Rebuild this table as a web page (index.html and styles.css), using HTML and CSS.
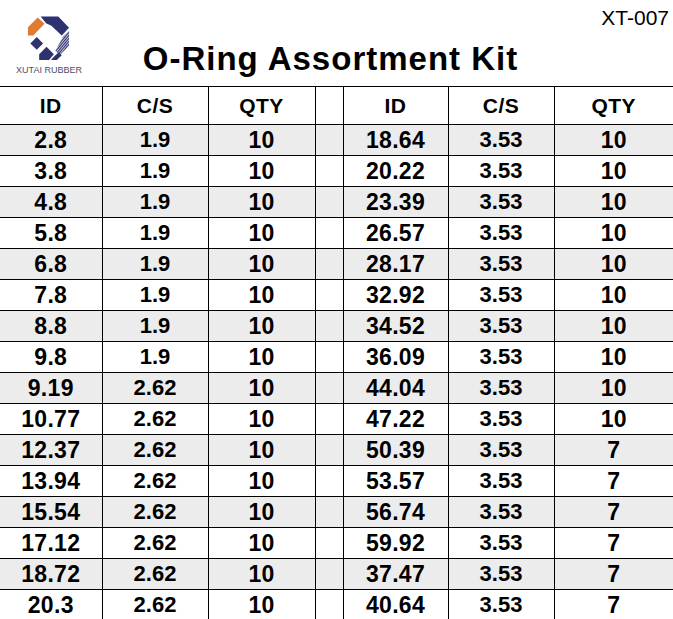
FILE: index.html
```html
<!DOCTYPE html>
<html lang="en">
<head>
<meta charset="utf-8">
<title>O-Ring Assortment Kit</title>
<link rel="stylesheet" href="styles.css">
</head>
<body>
<header class="top">
  <div class="brand">
    <svg class="logo" viewBox="0 0 48 48" width="47" height="47" aria-hidden="true">
      <defs>
        <pattern id="hatch" width="2" height="2" patternUnits="userSpaceOnUse" patternTransform="rotate(40)">
          <rect width="1.3" height="2" fill="#2f3270"/>
        </pattern>
      </defs>
      <polygon points="4,12.5 14,2.5 21,9 9.5,21 4,21" fill="#e07b32"/>
      <polygon points="17,1.5 35,1.5 46,13 38.5,21 28,11 22.5,8.5" fill="#2f3270"/>
      <polygon points="40,22 46,16 46,31.5 36.5,41 32,36.5" fill="url(#hatch)"/>
      <polygon points="13,22.5 19.5,29 13,35.5 6.5,29" fill="#2f3270"/>
      <polygon points="23,32.5 30.5,40 25.5,46 15.5,46 15.5,40" fill="#2f3270"/>
      <polygon points="31.5,41.5 35.5,38 38.5,41 33.5,46 27.5,46" fill="#2f3270"/>
    </svg>
    <div class="brand-name">XUTAI RUBBER</div>
  </div>
  <h1 class="title">O-Ring Assortment Kit</h1>
  <div class="code">XT-007</div>
</header>

<table class="kit">
  <colgroup>
    <col class="c-id"><col class="c-cs"><col class="c-qty">
    <col class="c-gap">
    <col class="c-id2"><col class="c-cs2"><col class="c-qty2">
  </colgroup>
  <thead>
    <tr>
      <th class="first">ID</th><th>C/S</th><th>QTY</th>
      <th class="gap"></th>
      <th>ID</th><th>C/S</th><th class="last">QTY</th>
    </tr>
  </thead>
  <tbody>
    <tr class="shade"><td class="first id">2.8</td><td class="cs">1.9</td><td class="qty">10</td><td class="gap"></td><td class="id">18.64</td><td class="cs">3.53</td><td class="qty last">10</td></tr>
    <tr><td class="first id">3.8</td><td class="cs">1.9</td><td class="qty">10</td><td class="gap"></td><td class="id">20.22</td><td class="cs">3.53</td><td class="qty last">10</td></tr>
    <tr class="shade"><td class="first id">4.8</td><td class="cs">1.9</td><td class="qty">10</td><td class="gap"></td><td class="id">23.39</td><td class="cs">3.53</td><td class="qty last">10</td></tr>
    <tr><td class="first id">5.8</td><td class="cs">1.9</td><td class="qty">10</td><td class="gap"></td><td class="id">26.57</td><td class="cs">3.53</td><td class="qty last">10</td></tr>
    <tr class="shade"><td class="first id">6.8</td><td class="cs">1.9</td><td class="qty">10</td><td class="gap"></td><td class="id">28.17</td><td class="cs">3.53</td><td class="qty last">10</td></tr>
    <tr><td class="first id">7.8</td><td class="cs">1.9</td><td class="qty">10</td><td class="gap"></td><td class="id">32.92</td><td class="cs">3.53</td><td class="qty last">10</td></tr>
    <tr class="shade"><td class="first id">8.8</td><td class="cs">1.9</td><td class="qty">10</td><td class="gap"></td><td class="id">34.52</td><td class="cs">3.53</td><td class="qty last">10</td></tr>
    <tr><td class="first id">9.8</td><td class="cs">1.9</td><td class="qty">10</td><td class="gap"></td><td class="id">36.09</td><td class="cs">3.53</td><td class="qty last">10</td></tr>
    <tr class="shade"><td class="first id">9.19</td><td class="cs">2.62</td><td class="qty">10</td><td class="gap"></td><td class="id">44.04</td><td class="cs">3.53</td><td class="qty last">10</td></tr>
    <tr><td class="first id">10.77</td><td class="cs">2.62</td><td class="qty">10</td><td class="gap"></td><td class="id">47.22</td><td class="cs">3.53</td><td class="qty last">10</td></tr>
    <tr class="shade"><td class="first id">12.37</td><td class="cs">2.62</td><td class="qty">10</td><td class="gap"></td><td class="id">50.39</td><td class="cs">3.53</td><td class="qty last">7</td></tr>
    <tr><td class="first id">13.94</td><td class="cs">2.62</td><td class="qty">10</td><td class="gap"></td><td class="id">53.57</td><td class="cs">3.53</td><td class="qty last">7</td></tr>
    <tr class="shade"><td class="first id">15.54</td><td class="cs">2.62</td><td class="qty">10</td><td class="gap"></td><td class="id">56.74</td><td class="cs">3.53</td><td class="qty last">7</td></tr>
    <tr><td class="first id">17.12</td><td class="cs">2.62</td><td class="qty">10</td><td class="gap"></td><td class="id">59.92</td><td class="cs">3.53</td><td class="qty last">7</td></tr>
    <tr class="shade"><td class="first id">18.72</td><td class="cs">2.62</td><td class="qty">10</td><td class="gap"></td><td class="id">37.47</td><td class="cs">3.53</td><td class="qty last">7</td></tr>
    <tr><td class="first id">20.3</td><td class="cs">2.62</td><td class="qty">10</td><td class="gap"></td><td class="id">40.64</td><td class="cs">3.53</td><td class="qty last">7</td></tr>
  </tbody>
</table>
</body>
</html>
```

FILE: styles.css
```css
html, body {
  margin: 0;
  padding: 0;
  background: #ffffff;
}

body {
  font-family: "Liberation Sans", Arial, sans-serif;
  color: #000;
  width: 673px;
  overflow: hidden;
}

.top {
  display: grid;
  grid-template-columns: 95px 1fr 107px;
  height: 86px;
}

.brand {
  display: flex;
  flex-direction: column;
  align-items: center;
  width: 66px;
  padding: 15px 0 0 16px;
}

.logo {
  display: block;
  margin-left: -3px;
}

.brand-name {
  margin-top: 3px;
  font-size: 9px;
  line-height: 10px;
  color: #4a4f6e;
  white-space: nowrap;
}

.title {
  margin: 0;
  padding-top: 43px;
  font-size: 33px;
  line-height: 32px;
  letter-spacing: 1px;
  font-weight: bold;
  text-align: center;
  white-space: nowrap;
}

.code {
  padding: 7px 4px 0 0;
  font-size: 21px;
  line-height: 21px;
  text-align: right;
  white-space: nowrap;
}

.kit {
  border-collapse: collapse;
  table-layout: fixed;
  width: 673px;
}

.c-id { width: 102px; }
.c-cs { width: 106px; }
.c-qty { width: 107px; }
.c-gap { width: 28px; }
.c-id2 { width: 105px; }
.c-cs2 { width: 106px; }
.c-qty2 { width: 119px; }

.kit th,
.kit td {
  border: 1px solid #000;
  padding: 0;
  text-align: center;
  font-weight: bold;
  white-space: nowrap;
}

.kit th {
  height: 37px;
  font-size: 21px;
  letter-spacing: 0.5px;
}

.kit td {
  height: 30px;
  font-size: 23px;
  letter-spacing: 0.3px;
}

.kit td.cs {
  font-size: 22px;
  letter-spacing: 0;
}

.kit .first { border-left: none; }
.kit .last { border-right: none; }

.kit tr.shade td {
  background: #ececec;
}
```
